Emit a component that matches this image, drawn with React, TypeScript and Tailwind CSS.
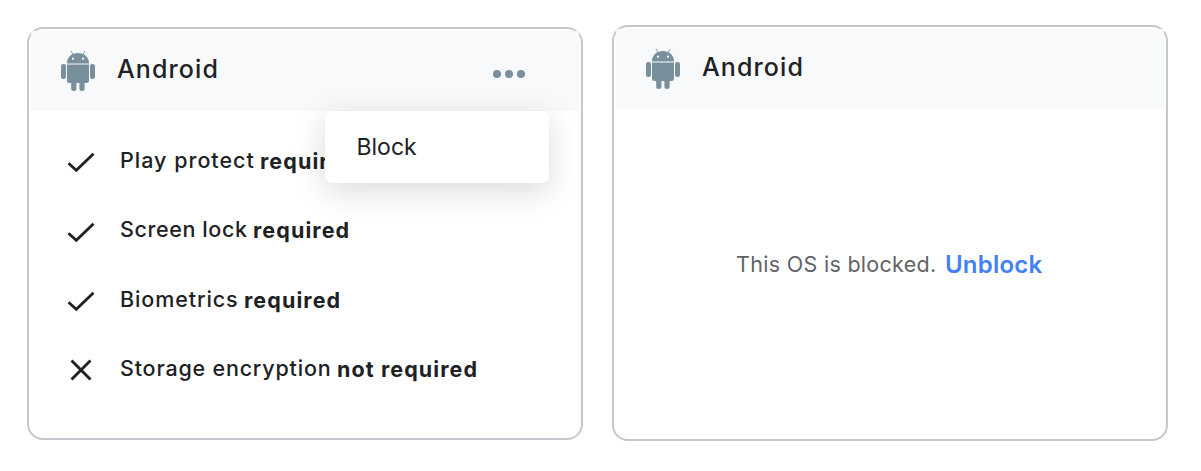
import type { ReactNode } from "react";

function AndroidIcon() {
  return (
    <svg className="mt-5 h-10 w-[34px] shrink-0" viewBox="0 0 34 40" fill="#78909c">
      <path d="M10.2 0.4 12.2 3.8M23.8 0.4 21.8 3.8" stroke="#78909c" strokeWidth="0.9" strokeLinecap="round" />
      <path fillRule="evenodd" d="M6 12C6 6 11 2 17 2s11 4 11 10ZM12 6.6a1.1 1.1 0 1 0 0 2.2 1.1 1.1 0 0 0 0-2.2Zm10 0a1.1 1.1 0 1 0 0 2.2 1.1 1.1 0 0 0 0-2.2Z" />
      <path d="M6 12h22v2H6Z" fill="#b7c4cb" />
      <path d="M6 14h22v15.5a2.5 2.5 0 0 1-2.5 2.5H8.5A2.5 2.5 0 0 1 6 29.5Z" />
      <rect x="0" y="13" width="5" height="15" rx="2.2" />
      <rect x="29" y="13" width="5" height="15" rx="2.2" />
      <rect x="10.2" y="28" width="5.2" height="12" rx="2.5" />
      <rect x="18.4" y="28" width="5.2" height="12" rx="2.5" />
    </svg>
  );
}

function CheckIcon() {
  return (
    <svg className="h-7 w-7" viewBox="0 0 28 28" fill="none" stroke="#202124" strokeWidth="2.8">
      <path d="M1.500 15.200 9.300 22.300 26.500 5.700" />
    </svg>
  );
}

function CrossIcon() {
  return (
    <svg className="h-7 w-7" viewBox="0 0 28 28" fill="none" stroke="#202124" strokeWidth="2.9">
      <path d="M4.500 3.500 23.500 22.500M23.500 3.500 4.500 22.500" />
    </svg>
  );
}

function CardHeader({ children }: { children?: ReactNode }) {
  return (
    <header className="relative flex h-20 w-[548px] rounded-[3px] bg-[#f7f9fb] pl-[30px]">
      <AndroidIcon />
      <h2 className="ml-[22px] mt-[22px] text-[25px] font-medium leading-8 tracking-[1.1px]">Android</h2>
      {children}
    </header>
  );
}

function Requirement({ icon, label, status }: { icon: ReactNode; label: ReactNode; status: ReactNode }) {
  return (
    <li className="flex h-[69.5px] items-start">
      <span className="mt-px w-[53px] shrink-0">{icon}</span>
      <span className="-mt-[1.5px] flex whitespace-pre text-[21.5px] font-medium leading-7">
        {label}
        <strong className="mt-px font-bold">{status}</strong>
      </span>
    </li>
  );
}

export default function App() {
  return (
    <main className="flex h-[471px] w-[1201px] gap-[29px] overflow-hidden bg-white pl-[27px] font-['Inter',sans-serif] text-[#202124]">
      <section className="mt-[27px] h-[413px] w-[556px] shrink-0 rounded-[16px] border-2 border-[#c4c8cc] p-[2px]">
        <CardHeader>
          <button aria-label="Options" className="ml-auto mr-[54px] mt-[39px] flex h-2 gap-1">
            <i className="h-2 w-2 rounded-full bg-[#78909c]" />
            <i className="h-2 w-2 rounded-full bg-[#78909c]" />
            <i className="h-2 w-2 rounded-full bg-[#78909c]" />
          </button>
          <div className="absolute left-[294px] top-20 flex h-[72px] w-56 items-center rounded-[7px] bg-white pl-[31.5px] text-[23px] shadow-[0_8px_32px_rgba(0,0,0,0.15)]">
            Block
          </div>
        </CardHeader>
        <ul className="pl-9 pt-[36px]">
          <Requirement icon={<CheckIcon />} label={<span className="w-[140px] tracking-[1px]">Play protect</span>} status={<span className="tracking-[1.1px]">required</span>} />
          <Requirement icon={<CheckIcon />} label={<span className="w-[133px] tracking-[0.6px]">Screen lock</span>} status={<span className="tracking-[1.1px]">required</span>} />
          <Requirement icon={<CheckIcon />} label={<span className="w-[124px] tracking-[0.9px]">Biometrics</span>} status={<span className="tracking-[1.1px]">required</span>} />
          <Requirement icon={<CrossIcon />} label={<span className="w-[217px] tracking-[0.8px]">Storage encryption</span>} status={<span className="tracking-[1.1px]">not required</span>} />
        </ul>
      </section>
      <section className="mt-[25px] h-[416px] w-[556px] shrink-0 rounded-[16px] border-2 border-[#c4c8cc] p-[2px]">
        <CardHeader />
        <div className="flex pl-[120px] pt-[140px] leading-8">
          <p className="-mt-px w-[209px] whitespace-nowrap text-[21.5px] tracking-[0.3px] text-[#5f6368]">This OS is blocked.</p>
          <a className="text-[24px] font-semibold tracking-[0.2px] text-[#4280f4]">Unblock</a>
        </div>
      </section>
    </main>
  );
}
